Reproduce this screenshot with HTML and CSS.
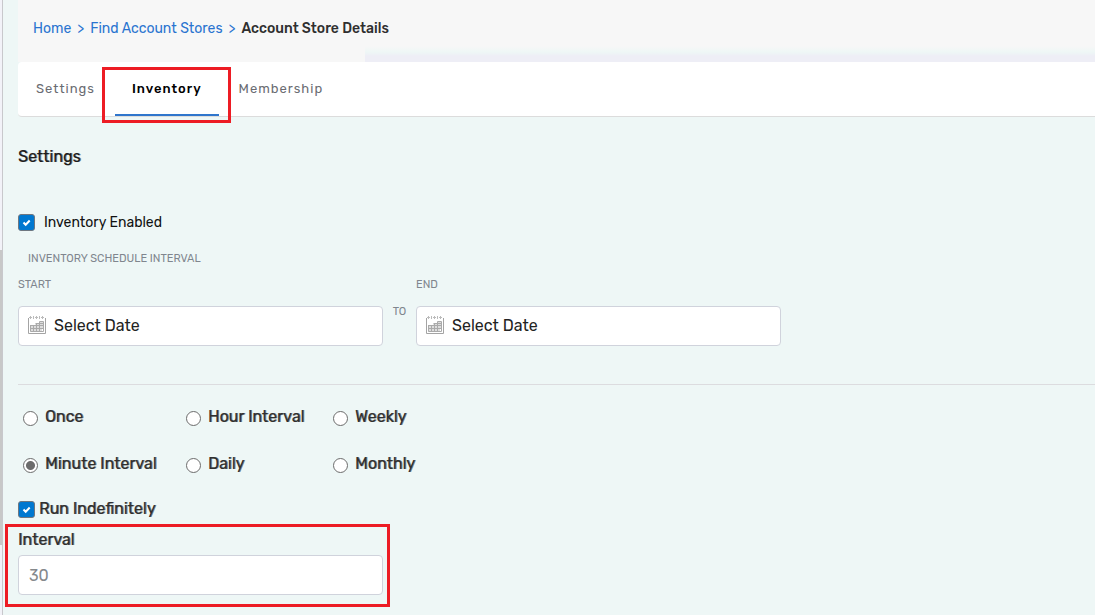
FILE: index.html
```html
<!DOCTYPE html>
<html lang="en">
<head>
  <meta charset="UTF-8" />
  <meta name="viewport" content="width=device-width, initial-scale=1.0" />
  <title>Account Store Details</title>
  <link rel="stylesheet" href="styles.css">
</head>
<body>
  <svg class="defs" width="0" height="0" aria-hidden="true">
    <symbol id="calendar" viewBox="0 0 18 18">
      <path d="M.5 2v15.500h17V2" fill="none" stroke="#a4a4a4" />
      <path d="M1 1.500h16" stroke="#bbb" stroke-dasharray="1 1" />
      <path d="M2.5 0v3M5.5 0v3M8.5 0v3M11.5 0v3M14.5 0v3" stroke="#bbb" />
      <path d="M12 5.500h3.500v7.500H14v3H2.500V9H7l1-2h4z" fill="#ddd" />
      <path d="M11.500 5.500h4M7.500 7.500h8M2.500 9.500h13M2.500 12.500h13M2.500 15.500h13M2.500 9v6.500M5.500 9v6.500M8.500 7v8.500M11.500 5.500v10M15.500 5.500v10" fill="none" stroke="#aaa" />
    </symbol>
  </svg>

  <div class="rail"><div class="thumb"></div></div>

  <div class="page">
    <header class="header">
      <nav class="breadcrumb">
        <a href="#">Home</a>
        <span>&gt;</span>
        <a href="#">Find Account Stores</a>
        <span>&gt;</span>
        <strong>Account Store Details</strong>
      </nav>
    </header>

    <nav class="tabs">
      <a class="tab" href="#">Settings</a>
      <a class="tab active" href="#">Inventory</a>
      <a class="tab" href="#">Membership</a>
    </nav>

    <form class="content">
      <h2>Settings</h2>

      <label class="check enabled"><input type="checkbox" checked />Inventory Enabled</label>

      <p class="caption">Inventory Schedule Interval</p>
      <div class="dates">
        <div class="date">
          <label for="start">Start</label>
          <div class="date-box">
            <svg width="18" height="18"><use href="#calendar" /></svg>
            <input type="text" id="start" value="Select Date" />
          </div>
        </div>
        <span class="to">To</span>
        <div class="date">
          <label for="end">End</label>
          <div class="date-box">
            <svg width="18" height="18"><use href="#calendar" /></svg>
            <input type="text" id="end" value="Select Date" />
          </div>
        </div>
      </div>

      <hr />

      <div class="frequency">
        <label><input type="radio" name="frequency" />Once</label>
        <label><input type="radio" name="frequency" />Hour Interval</label>
        <label><input type="radio" name="frequency" />Weekly</label>
        <label><input type="radio" name="frequency" checked />Minute Interval</label>
        <label><input type="radio" name="frequency" />Daily</label>
        <label><input type="radio" name="frequency" />Monthly</label>
      </div>

      <label class="check run"><input type="checkbox" checked />Run Indefinitely</label>

      <div class="interval">
        <label for="interval">Interval</label>
        <input type="text" id="interval" placeholder="30" />
      </div>
    </form>
  </div>
</body>
</html>
```

FILE: styles.css
```css
* {
  box-sizing: border-box;
}

body {
  font-family: Rubik, Roboto, sans-serif;
  font-size: 16px;
  margin: 0;
  min-height: 100vh;
  display: flex;
  background: #eef7f6;
  color: #2f2f2f;
}

.defs {
  position: absolute;
}

.rail {
  display: grid;
  grid-template-rows: 250fr 295fr 70fr;
  width: 3px;
  border-right: 1px solid #c8c8cc;
  background: #f2f2f8;
}

.thumb {
  grid-row: 2;
  background: #c8c8c8;
}

.page {
  flex: 1;
  min-width: 0;
  padding-left: 15px;
}

.header {
  height: 62px;
  padding: 19px 15px 0;
  background: #f7f7f7 linear-gradient(#f7f7f7 46px, #eef7f6 52px, #eeeef6 56px) 347px 0 no-repeat;
}

.breadcrumb {
  display: flex;
  gap: 6px;
  font-size: 14px;
  line-height: 20px;
}

.breadcrumb a,
.breadcrumb span {
  color: #2a74d0;
  text-decoration: none;
}

.breadcrumb strong {
  font-weight: 500;
}

.tabs {
  display: flex;
  gap: 20px;
  height: 55px;
  padding-left: 18px;
  background: white;
  border-bottom: 1px solid #dcdcdc;
  border-radius: 4px 0 0 4px;
}

.tab {
  position: relative;
  padding-top: 17px;
  font-size: 13px;
  line-height: 20px;
  letter-spacing: 1px;
  color: #6a6c72;
  text-decoration: none;
}

.tab.active {
  padding-left: 17px;
  padding-right: 17px;
  font-weight: 500;
  color: black;
  border-bottom: 2px solid #2f75cc;
}

/* red frames around the highlighted parts */
.tab.active::after,
.interval::after {
  content: "";
  position: absolute;
  inset: 5px -12px -9px -13px;
  border: 3px solid #ed1c24;
  pointer-events: none;
}

/* slightly heavier regular weight */
h2,
.frequency label,
.run,
.interval label {
  font-weight: 400;
  text-shadow: 1px 0 rgba(47, 47, 47, 0.6);
}

h2 {
  margin: 0;
  padding-top: 30px;
  font-size: 16px;
  line-height: 20px;
  color: #1c1c1c;
}

.check {
  display: flex;
  align-items: center;
  line-height: 20px;
}

.check input {
  appearance: none;
  width: 17px;
  height: 17px;
  margin: 0;
  border: 1px solid #6f7780;
  border-radius: 3px;
  background: #0078d0 url("data:image/svg+xml,%3Csvg xmlns='http://www.w3.org/2000/svg' viewBox='0 0 15 15'%3E%3Cpath d='M4.500 7.500l2.200 2.300 4-4.300' fill='none' stroke='white' stroke-width='2'/%3E%3C/svg%3E") center / 15px 15px no-repeat;
}

.enabled {
  gap: 9px;
  margin-top: 46px;
  font-size: 14px;
  color: #111;
}

.enabled input {
  margin-bottom: 2px;
}

.caption,
.date label,
.to {
  font-size: 11px;
  line-height: 16px;
  color: #80868e;
  text-transform: uppercase;
}

.caption {
  margin: 18px 0 10px 10px;
}

.dates {
  display: flex;
  align-items: flex-start;
}

.date {
  flex: 0 1 365px;
}

.date label {
  display: block;
  margin-bottom: 13px;
}

.to {
  flex: 0 0 33px;
  padding-top: 27px;
  text-align: center;
}

.date-box {
  display: flex;
  align-items: center;
  gap: 8px;
  height: 40px;
  padding: 0 9px 2px;
  background: white;
  border: 1px solid #d0d3dc;
  border-radius: 4px;
}

.date-box input {
  flex: 1;
  min-width: 0;
  padding: 0;
  border: 0;
  font: inherit;
  color: #222;
}

hr {
  margin: 38px 0 22px;
  border: 0;
  border-top: 1px solid #dcdcdf;
}

.frequency {
  display: grid;
  grid-template-columns: 163px 147px auto;
  justify-content: start;
  row-gap: 27px;
  padding-left: 5px;
  line-height: 20px;
}

.frequency label {
  display: flex;
  align-items: center;
  gap: 7px;
}

.frequency input {
  appearance: none;
  width: 15px;
  height: 15px;
  margin: 2px 0 0;
  border: 1px solid #6c6c6c;
  border-radius: 50%;
  background: white;
}

.frequency input:checked {
  background: radial-gradient(circle, #6c6c6c 4px, white 5px);
}

.run {
  gap: 4px;
  margin-top: 25px;
}

.interval {
  position: relative;
  max-width: 365px;
  margin-top: 11px;
}

.interval::after {
  inset: -6px -7px -12px -13px;
}

.interval label {
  display: block;
  margin-bottom: 5px;
  line-height: 20px;
}

.interval input {
  display: block;
  width: 100%;
  height: 40px;
  padding: 0 10px;
  border: 1px solid #d0d3dc;
  border-radius: 4px;
  font-family: inherit;
  font-size: 16px;
}

.interval input::placeholder {
  color: #85898c;
}
```
